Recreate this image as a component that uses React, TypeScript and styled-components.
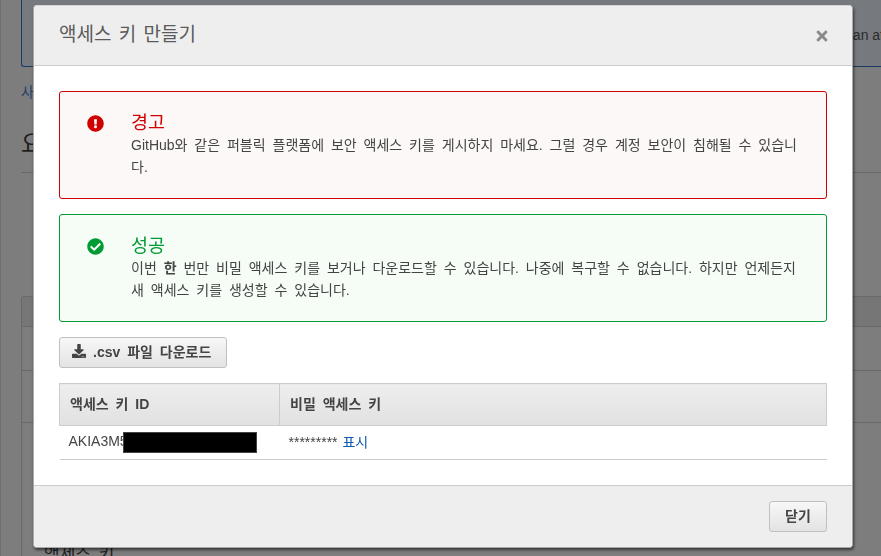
import styled, { createGlobalStyle } from "styled-components";
import { FaCheckCircle, FaDownload, FaExclamationCircle, FaTimes } from "react-icons/fa";

const GlobalStyle = createGlobalStyle`
  html, body {
    margin: 0;
    padding: 0;
    background: #7d7d7d;
  }
  * {
    box-sizing: border-box;
  }
  body {
    font-family: "Liberation Sans", "Noto Sans CJK KR", sans-serif;
    font-size: 14px;
    word-spacing: 3px;
    color: #444;
    overflow: hidden;
  }
`;

const alertColors = {
  error: { border: "#d00000", bg: "#fdf8f8", title: "#d00000" },
  success: { border: "#029a34", bg: "#f5fdf6", title: "#029a34" },
};

function App() {
  return (
    <>
      <GlobalStyle />
      <Page>
        <Banner>
          <BannerText>an at</BannerText>
        </Banner>
        <Crumb>사</Crumb>
        <PageTitle>요</PageTitle>
        <Rule />
        <BackCard>
          <BackCardHead />
          <BackRow />
          <BackRow $tall />
        </BackCard>
        <BackLabel>액세스 키</BackLabel>
      </Page>

      <Modal>
        <ModalHeader>
          <ModalTitle>액세스 키 만들기</ModalTitle>
          <CloseIcon>
            <FaTimes size={16} />
          </CloseIcon>
        </ModalHeader>
        <ModalBody>
          <Alert $kind="error">
            <AlertIcon $kind="error">
              <FaExclamationCircle size={17} />
            </AlertIcon>
            <AlertContent>
              <AlertTitle $kind="error">경고</AlertTitle>
              <AlertText>
                GitHub와 같은 퍼블릭 플랫폼에 보안 액세스 키를 게시하지 마세요. 그럴 경우 계정 보안이 침해될 수 있습니다.
              </AlertText>
            </AlertContent>
          </Alert>
          <Alert $kind="success">
            <AlertIcon $kind="success">
              <FaCheckCircle size={17} />
            </AlertIcon>
            <AlertContent>
              <AlertTitle $kind="success">성공</AlertTitle>
              <AlertText>
                이번 <b>한</b> 번만 비밀 액세스 키를 보거나 다운로드할 수 있습니다. 나중에 복구할 수 없습니다. 하지만 언제든지 새 액세스 키를 생성할 수 있습니다.
              </AlertText>
            </AlertContent>
          </Alert>
          <Button>
            <FaDownload size={14} />
            .csv 파일 다운로드
          </Button>
          <KeyTable>
            <thead>
              <tr>
                <HeadCell $width={220}>액세스 키 ID</HeadCell>
                <HeadCell>비밀 액세스 키</HeadCell>
              </tr>
            </thead>
            <tbody>
              <tr>
                <BodyCell $lift={0}>
                  AKIA3M5
                  <Redaction />
                </BodyCell>
                <BodyCell $lift={4}>
                  <Masked>*********</Masked> <ShowLink>표시</ShowLink>
                </BodyCell>
              </tr>
            </tbody>
          </KeyTable>
        </ModalBody>
        <ModalFooter>
          <CloseButton>닫기</CloseButton>
        </ModalFooter>
      </Modal>
    </>
  );
}
export default App;

const Page = styled.div`
  position: relative;
  height: 556px;
  overflow: hidden;
  padding-left: 21px;
  display: flex;
  flex-direction: column;
  background: linear-gradient(to right, #6f6f6f 0, #6f6f6f 1px, #7d7d7d 1px);
`;

const Banner = styled.div`
  height: 69px;
  margin-top: -2px;
  flex-shrink: 0;
  background: #767a7e;
  border: 1px solid #1a3a63;
  border-right: none;
  border-radius: 0 0 0 3px;
  display: flex;
  justify-content: flex-end;
  align-items: center;
  padding-top: 4px;
  color: #2b2b2b;
  overflow: hidden;
`;

const BannerText = styled.span`
  font-size: 14px;
  white-space: nowrap;
  word-spacing: 0;
  margin-right: -3px;
`;

const Crumb = styled.div`
  margin-top: 15px;
  height: 20px;
  line-height: 20px;
  font-size: 14px;
  color: #1f3f6a;
`;

const PageTitle = styled.div`
  margin-top: 24px;
  height: 36px;
  line-height: 36px;
  font-size: 24px;
  color: #1f1f1f;
`;

const Rule = styled.div`
  margin-top: 10px;
  height: 1px;
  background: #696969;
`;

const BackCard = styled.div`
  margin-top: 123px;
  height: 260px;
  flex-shrink: 0;
  border-left: 1px solid #696969;
  border-top: 1px solid #696969;
  border-top-left-radius: 3px;
`;

const BackCardHead = styled.div`
  height: 30px;
  background: #767676;
  border-bottom: 1px solid #696969;
`;

const BackRow = styled.div<{ $tall?: boolean }>`
  height: ${(p) => (p.$tall ? 52 : 44)}px;
  border-bottom: 1px solid #696969;
`;

const BackLabel = styled.div`
  position: absolute;
  left: 44px;
  top: 540px;
  font-size: 17px;
  color: #1f1f1f;
`;

const Modal = styled.div`
  position: fixed;
  left: 33px;
  top: 5px;
  width: 820px;
  height: 543px;
  display: flex;
  flex-direction: column;
  background: #fff;
  border-radius: 4px;
  border: 1px solid #a9a9a9;
  border-top-color: #d5d5d5;
  box-shadow: 1px 2px 3px rgba(0, 0, 0, 0.55);
  overflow: hidden;
`;

const ModalHeader = styled.div`
  height: 60px;
  flex-shrink: 0;
  padding: 0 25px;
  background: #eeeeee;
  border-bottom: 1px solid #cccccc;
  display: flex;
  align-items: center;
  justify-content: space-between;
`;

const ModalTitle = styled.h2`
  margin: -6px 0 0;
  font-size: 19px;
  font-weight: 400;
  word-spacing: 2px;
  color: #5a5a5a;
`;

const CloseIcon = styled.span`
  display: flex;
  color: #8a8a8a;
  margin-top: 0;
  margin-right: -3px;
`;

const ModalBody = styled.div`
  flex: 1;
  padding: 25px 25px 0;
  display: flex;
  flex-direction: column;
  align-items: flex-start;
`;

const Alert = styled.div<{ $kind: "error" | "success" }>`
  width: 768px;
  height: 108px;
  margin-bottom: 15px;
  padding: 20px 25px 0 27px;
  display: flex;
  gap: 27px;
  background: ${(p) => alertColors[p.$kind].bg};
  border: 1px solid ${(p) => alertColors[p.$kind].border};
  border-radius: 3px;
`;

const AlertIcon = styled.span<{ $kind: "error" | "success" }>`
  display: flex;
  flex-shrink: 0;
  margin-top: 3px;
  height: 17px;
  color: ${(p) => alertColors[p.$kind].title};
`;

const AlertContent = styled.div`
  min-width: 0;
  flex: 1;
`;

const AlertTitle = styled.div<{ $kind: "error" | "success" }>`
  font-size: 18.5px;
  line-height: 22px;
  color: ${(p) => alertColors[p.$kind].title};
`;

const AlertText = styled.p`
  margin: 0;
  font-size: 14px;
  line-height: 22px;
  color: #444;
`;

const Button = styled.button`
  width: 168px;
  height: 31px;
  padding: 0 0 3px 12px;
  display: flex;
  align-items: center;
  gap: 7px;
  font-family: inherit;
  font-size: 14px;
  font-weight: 700;
  word-spacing: 3px;
  color: #444;
  background: linear-gradient(to bottom, #f7f7f7, #e3e3e3);
  border: 1px solid #c0c0c0;
  border-radius: 3px;
  white-space: nowrap;
`;

const KeyTable = styled.table`
  width: 768px;
  margin-top: 15px;
  border-collapse: collapse;
  table-layout: fixed;
`;

const HeadCell = styled.th<{ $width?: number }>`
  width: ${(p) => (p.$width ? `${p.$width}px` : "auto")};
  height: 42px;
  padding: 0 10px 3px;
  text-align: left;
  font-size: 14px;
  font-weight: 700;
  color: #444;
  background: linear-gradient(to bottom, #eeeeee, #e1e1e1);
  border: 1px solid #cccccc;
`;

const BodyCell = styled.td<{ $lift: number }>`
  height: 34px;
  padding: 0 9px ${(p) => p.$lift}px;
  font-size: 14px;
  color: #444;
  border-bottom: 1px solid #cccccc;
  white-space: nowrap;
  word-spacing: 0;
`;

const Redaction = styled.span`
  display: inline-block;
  width: 134px;
  height: 21px;
  margin-left: -5px;
  vertical-align: middle;
  background: #000;
  border: 1px solid #444;
`;

const Masked = styled.span`
  color: #444;
`;

const ShowLink = styled.a`
  margin-left: 1px;
  color: #0e5ab0;
`;

const ModalFooter = styled.div`
  height: 62px;
  flex-shrink: 0;
  padding: 15px 25px 0 0;
  background: #eeeeee;
  border-top: 1px solid #cccccc;
  display: flex;
  justify-content: flex-end;
  align-items: flex-start;
`;

const CloseButton = styled.button`
  width: 58px;
  height: 31px;
  padding: 0 0 3px;
  font-family: inherit;
  font-size: 14px;
  font-weight: 700;
  color: #444;
  background: linear-gradient(to bottom, #f7f7f7, #e3e3e3);
  border: 1px solid #c0c0c0;
  border-radius: 3px;
`;
